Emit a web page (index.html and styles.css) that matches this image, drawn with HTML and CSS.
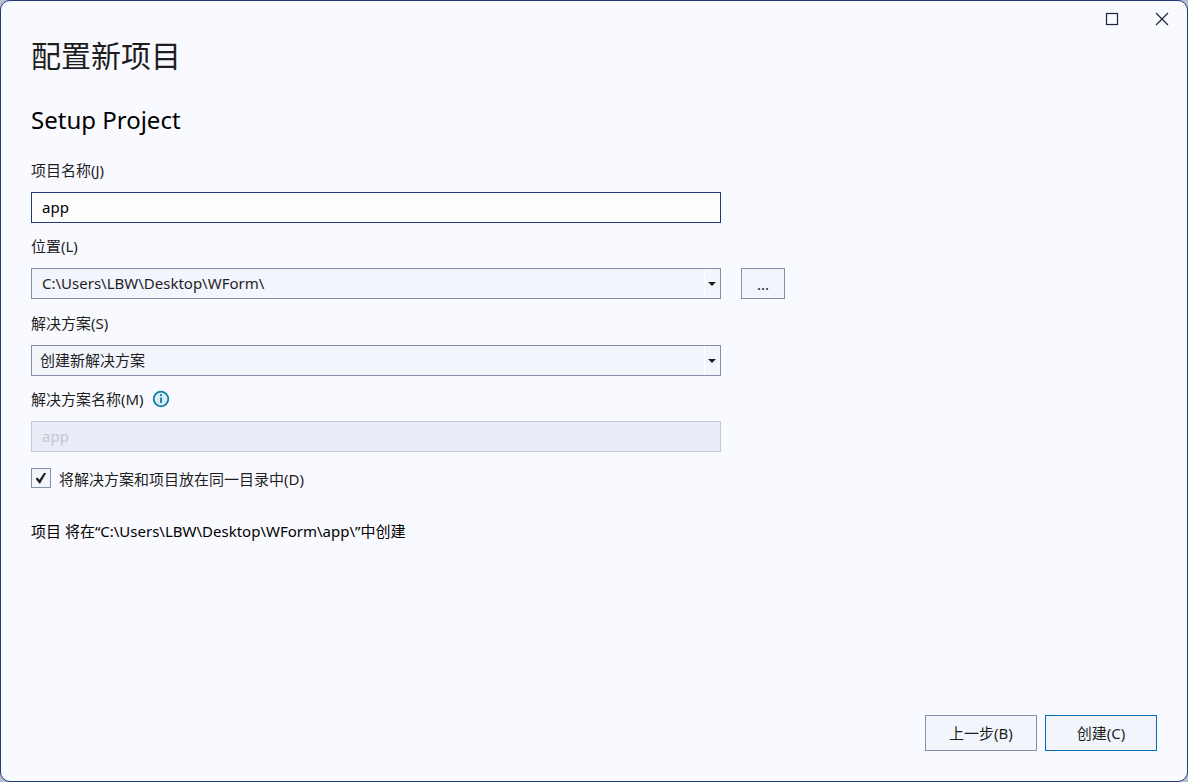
FILE: index.html
```html
<!DOCTYPE html>
<html lang="zh-CN">
<head>
<meta charset="utf-8">
<title>配置新项目</title>
<link rel="stylesheet" href="styles.css">
</head>
<body>
<div class="window">
  <header class="titlebar">
    <button class="caption-button" type="button" aria-label="最大化">
      <svg width="14" height="14" viewBox="0 0 14 14"><rect x="1.5" y="1.5" width="11" height="11" fill="none" stroke="#1b2740" stroke-width="1.2"/></svg>
    </button>
    <button class="caption-button" type="button" aria-label="关闭">
      <svg width="14" height="14" viewBox="0 0 14 14"><path d="M1 1L13 13M13 1L1 13" fill="none" stroke="#1b2740" stroke-width="1.2"/></svg>
    </button>
  </header>
  <form class="content">
    <h1 class="title">配置新项目</h1>
    <h2 class="subtitle">Setup Project</h2>

    <div class="field">
      <label class="label" for="project-name">项目名称(J)</label>
      <div class="field-row"><input class="box box-active" id="project-name" type="text" value="app"></div>
    </div>

    <div class="field field-location">
      <label class="label" for="location">位置(L)</label>
      <div class="field-row">
        <div class="combo">
          <select class="box" id="location"><option>C:\Users\LBW\Desktop\WForm\</option></select>
          <svg class="combo-arrow" width="8" height="4" viewBox="0 0 8 4"><path d="M0 0H8L4 4Z" fill="#1e1e1e"/></svg>
        </div>
        <button class="button browse" type="button" aria-label="浏览">...</button>
      </div>
    </div>

    <div class="field">
      <label class="label" for="solution">解决方案(S)</label>
      <div class="field-row">
        <div class="combo">
          <select class="box box-list" id="solution"><option>创建新解决方案</option></select>
          <svg class="combo-arrow" width="8" height="4" viewBox="0 0 8 4"><path d="M0 0H8L4 4Z" fill="#1e1e1e"/></svg>
        </div>
      </div>
    </div>

    <div class="field">
      <label class="label" for="solution-name">解决方案名称(M)
        <svg class="info" width="18" height="18" viewBox="0 0 18 18"><circle cx="9" cy="9" r="7.3" fill="#dcecf4" stroke="#0c7fa5" stroke-width="1.8"/><path d="M9 7.5V13" stroke="#0c7fa5" stroke-width="1.8"/><circle cx="9" cy="5.2" r="1.1" fill="#0c7fa5"/></svg>
      </label>
      <div class="field-row"><input class="box" id="solution-name" type="text" value="app" disabled></div>
    </div>

    <div class="check-row">
      <input class="check" id="same-folder" type="checkbox" checked>
      <label class="check-label" for="same-folder">将解决方案和项目放在同一目录中(D)</label>
    </div>

    <p class="summary">项目 将在“C:\Users\LBW\Desktop\WForm\app\”中创建</p>
  </form>
  <footer class="actions">
    <button class="button action" type="button">上一步(B)</button>
    <button class="button action action-default" type="button">创建(C)</button>
  </footer>
</div>
</body>
</html>
```
FILE: styles.css
```css
* {
  box-sizing: border-box;
}

body {
  margin: 0;
  background: #b9bfd3;
  color: #1e1e1e;
  font: 15px/20px "Noto Sans", "Noto Sans CJK SC", sans-serif;
}

input,
select,
button {
  font: inherit;
  color: inherit;
}

.window {
  display: flex;
  flex-direction: column;
  min-height: 100vh;
  border: 1px solid #1f3a7a;
  border-radius: 10px;
  background: #f9faff;
}

.titlebar {
  display: flex;
  justify-content: flex-end;
  height: 36px;
}

.caption-button {
  display: flex;
  align-items: center;
  justify-content: center;
  width: 50px;
  padding: 0;
  border: 0;
  background: none;
}

.content {
  flex: 1;
  padding: 0 30px;
}

.title {
  margin: 0;
  font-size: 30px;
  line-height: 38px;
  font-weight: 400;
}

.subtitle {
  margin: 29px 0 24px;
  color: #000;
  font-size: 24px;
  line-height: 32px;
  font-weight: 400;
}

.field {
  max-width: 690px;
  margin-bottom: 13px;
}

.field-location {
  margin-bottom: 14px;
}

.label {
  display: flex;
  align-items: center;
  gap: 8px;
  margin-bottom: 12px;
}

.field-row {
  display: flex;
}

.combo {
  position: relative;
  flex: none;
  width: 100%;
}

.box {
  appearance: none;
  width: 100%;
  height: 31px;
  padding: 0 10px 2px;
  border: 1px solid #8591a8;
  border-radius: 0;
  background: #f2f5fc;
}

.box-active {
  border-color: #1f3a7a;
  background: #fdfdfd;
  color: #000;
}

.box-list {
  padding-left: 8px;
}

.box:disabled {
  border-color: #c5cad8;
  background: #e9edf7;
  color: #c3c7d1;
  opacity: 1;
}

.combo::after {
  content: "";
  position: absolute;
  top: 1px;
  right: 16px;
  bottom: 1px;
  width: 1px;
  background: #fff;
  pointer-events: none;
}

.combo-arrow {
  position: absolute;
  top: 14px;
  right: 5px;
  pointer-events: none;
}

.button {
  padding: 0;
  border: 1px solid #8591a8;
  border-radius: 0;
  background: #f2f5fc;
}

.browse {
  flex: none;
  width: 44px;
  height: 31px;
  margin-left: 20px;
}

.check-row {
  display: flex;
  align-items: center;
  gap: 8px;
  margin-top: 15px;
}

.check {
  appearance: none;
  width: 20px;
  height: 20px;
  margin: 0;
  border: 1px solid #8591a8;
  background: #f2f5fc;
  display: grid;
  place-items: center;
}

.check:checked::before {
  content: "";
  width: 11px;
  height: 11px;
  background: #1e1e1e;
  clip-path: polygon(0 55%, 17% 45%, 36% 66%, 80% 0, 100% 0, 42% 100%, 34% 100%);
}

.check-label {
  padding-top: 2px;
}

.summary {
  margin: 32px 0 0;
  color: #000;
}

.actions {
  display: flex;
  justify-content: flex-end;
  gap: 8px;
  padding: 0 30px 30px;
}

.action {
  width: 112px;
  height: 36px;
}

.action-default {
  border-color: #006cb4;
}
```
